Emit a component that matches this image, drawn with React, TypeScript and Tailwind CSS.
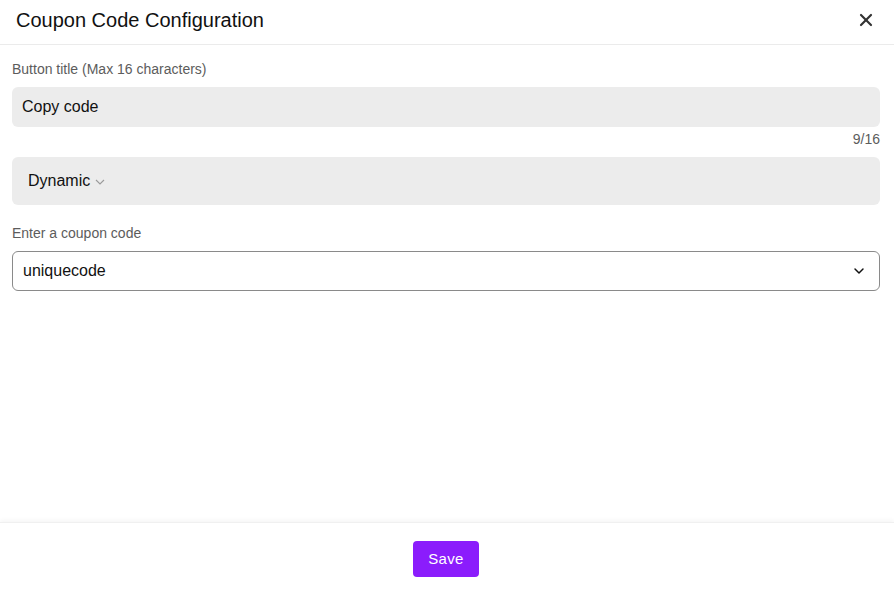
import { X, ChevronDown } from 'lucide-react'

export default function App() {
  return (
    <div className="h-screen w-full flex flex-col bg-white text-[#1a1a1a]" style={{ fontFamily: '"Liberation Sans", Arial, sans-serif' }}>
      {/* Header */}
      <div className="h-[45px] shrink-0 flex items-center justify-between pl-4 pr-[18px] pb-[4px] border-b border-[#ebebeb]">
        <h1 className="text-[20px] leading-[24px] text-[#111]">Coupon Code Configuration</h1>
        <button className="text-[#333]">
          <X className="w-[20px] h-[20px]" strokeWidth={2.6} />
        </button>
      </div>

      {/* Body */}
      <div className="flex-1 pl-3 pr-[14px] pt-[16px]">
        <label className="block text-[14px] leading-[17px] text-[#5c5c5c] mb-[9px]">Button title (Max 16 characters)</label>
        <div className="h-10 rounded-md bg-[#ececec] flex items-center px-[10px] text-[16px] text-[#111]">Copy code</div>
        <div className="text-right text-[14px] leading-[17px] text-[#5c5c5c] mt-[4px]">9/16</div>

        <div className="mt-[9px] h-[48px] rounded-md bg-[#ececec] flex items-center pl-4 text-[16px] text-[#111]">
          Dynamic
          <svg width="10" height="6" viewBox="0 0 10 6" className="ml-[5px] mt-[2px]" fill="none">
            <path d="M1 1l4 4 4-4" stroke="#9a9a9a" strokeWidth="1.1" />
          </svg>
        </div>

        <label className="block mt-[20px] text-[14px] leading-[17px] text-[#5c5c5c] mb-[9px]">Enter a coupon code</label>
        <div className="h-10 rounded-md border border-[#8a8a8a] flex items-center justify-between pl-[10px] pr-[12px] text-[16px] text-[#111]">
          uniquecode
          <ChevronDown className="w-[16px] h-[16px] text-[#111]" strokeWidth={2.2} />
        </div>
      </div>

      {/* Footer */}
      <div className="h-[69px] shrink-0 flex justify-center pt-[18px] pr-[2px] border-t border-[#f0f0f0] shadow-[0_-2px_4px_rgba(0,0,0,0.04)]">
        <button className="h-9 w-[66px] rounded-[4px] bg-[#8b1cfc] text-white text-[15px] tracking-[0.3px]">Save</button>
      </div>
    </div>
  )
}
